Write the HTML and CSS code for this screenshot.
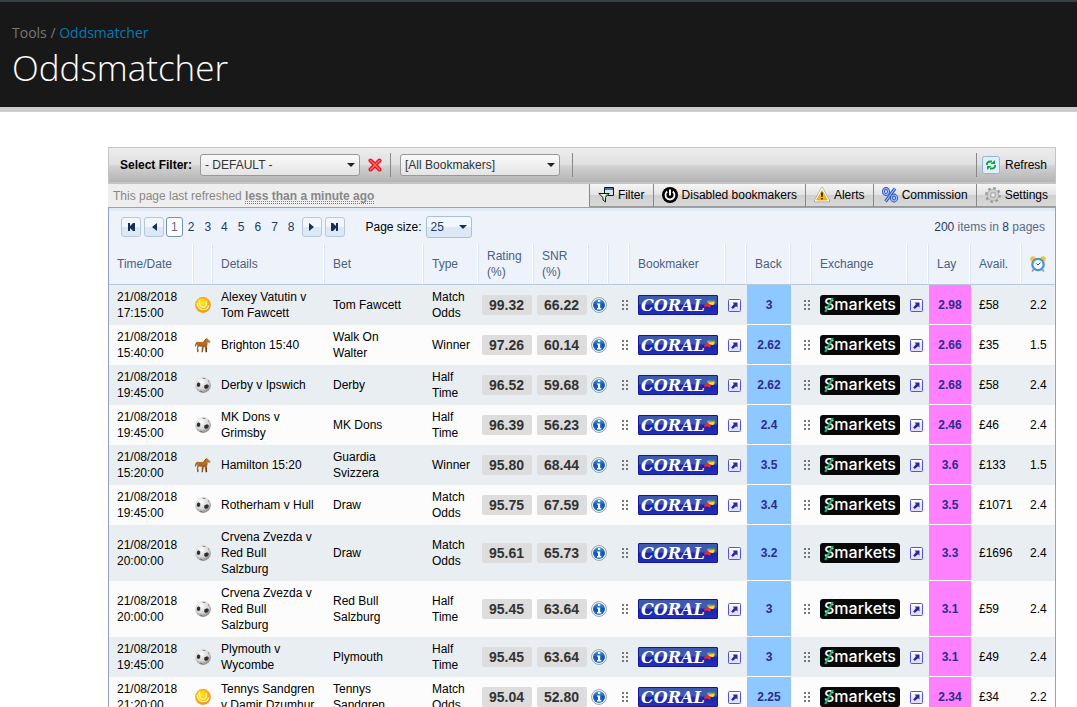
FILE: index.html
```html
<!DOCTYPE html>
<html lang="en">
<head>
<meta charset="utf-8">
<meta name="viewport" content="width=device-width, initial-scale=1">
<title>Oddsmatcher</title>
<link rel="stylesheet" href="styles.css">
</head>
<body>
<svg class="sprite" aria-hidden="true">
  <defs>
    <radialGradient id="g-tennis" cx=".4" cy=".35" r=".7"><stop offset="0" stop-color="#ffee20"/><stop offset=".6" stop-color="#fbc00a"/><stop offset="1" stop-color="#f08a10"/></radialGradient>
    <radialGradient id="g-foot" cx=".4" cy=".3" r=".75"><stop offset="0" stop-color="#fff"/><stop offset=".6" stop-color="#d4d4d4"/><stop offset="1" stop-color="#7c7c7c"/></radialGradient>
    <linearGradient id="g-info" x2="0" y2="1"><stop offset="0" stop-color="#5a9ce4"/><stop offset=".5" stop-color="#0b56b8"/><stop offset="1" stop-color="#1c74d4"/></linearGradient>
    <linearGradient id="g-open" x2="0" y2="1"><stop offset="0" stop-color="#fff"/><stop offset="1" stop-color="#dcdcf8"/></linearGradient>
    <linearGradient id="g-warn" x2="0" y2="1"><stop offset="0" stop-color="#ffd94a"/><stop offset="1" stop-color="#f7a800"/></linearGradient>
    <linearGradient id="g-horse" x2="0" y2="1"><stop offset="0" stop-color="#cc8234"/><stop offset="1" stop-color="#8a4a14"/></linearGradient>
  </defs>
  <symbol id="tennis" viewBox="0 0 16 16"><circle cx="8" cy="8" r="7.9" fill="#f59a2a"/><circle cx="8" cy="8" r="7" fill="url(#g-tennis)"/><path d="M4.200 2.800C3.800 8 5.500 10.500 8.500 10.200S12 7 10.800 4M2 6c.5 4.500 4 7.500 8 6.500 2.200-.6 3.500-2.200 4-4" fill="none" stroke="#fffbd0" stroke-width="1.100"/></symbol>
  <symbol id="football" viewBox="0 0 16 16"><circle cx="8" cy="8" r="7.900" fill="url(#g-foot)"/><path d="M2 6.500l1.500-1.200 1.800 1.300-.2 2.600-1.800.8L1.800 9zM9.500 8.200l2.500-1 1.800 1.300-.6 2.600-2.400 1-1.700-1.400z" fill="#303030"/><path d="M7 .8l3 .2.600.7-2 .3zM5 13.500l2 .5.500 1.200-2-.3zM13.300 3.200l1.200 1.600-.5.300-1-1z" fill="#777"/></symbol>
  <symbol id="horse" viewBox="0 0 16 16"><path d="M.3 9.500L.9 5.800C1.500 4.700 2.800 4.600 4.200 4.900l4.600-.1 2-3 1.200-1 .5 1 3 2.600-.5 1.300-2.300-.4-.3 2.700-.5 1.600.1 5.600h-1.500l-.6-5.200-1.200.3-.8 5h-1.300l.2-5.500-3-.2-1.200 2 .2 3.600H2.200L1.800 11.500l.6-3.200L1.600 7z" fill="url(#g-horse)"/><path d="M8.800 4.800l2.400-3M.5 9.500L1 6.500M11.300 10.500l.4 4.500M3 11.500v3.500" stroke="#4f2c0c" stroke-width=".8" fill="none"/></symbol>
  <symbol id="info" viewBox="0 0 16 16"><circle cx="8" cy="8" r="7.400" fill="#fff" stroke="#909498" stroke-width=".9"/><circle cx="8" cy="8" r="6" fill="url(#g-info)"/><path d="M7 3h2.200v2H7zM6 6.400h3.200v4.700h1.100v1.300H6v-1.300h1V7.700H6z" fill="#fff"/></symbol>
  <symbol id="open" viewBox="0 0 13 13"><rect x=".5" y=".5" width="12" height="12" rx="1" fill="url(#g-open)" stroke="#5550e8"/><path d="M4.500 3.500H9.500v5L8 7.200 4.800 10 3.200 8.400 6 5z" fill="#2c26a4"/></symbol>
  <symbol id="grip" viewBox="0 0 7 11"><path d="M0 0h2v2H0zM4 0h2v2H4zM0 4h2v2H0zM4 4h2v2H4zM0 8h2v2H0zM4 8h2v2H4z" fill="#777"/></symbol>
  <symbol id="flag" viewBox="0 0 12 10"><path d="M3.500 1.500L11 1.500 10.300 3.500H3z" fill="#5cb85c"/><path d="M3.500 3.500L11 3l-1.500 3H5z" fill="#ffd84a"/><path d="M0 6.500Q2 4 4 4l2 1.500h1.500L5.500 9 4 7.600 0 7.800z" fill="#f0282c"/></symbol>
</svg>

<header class="masthead">
  <nav class="crumbs" aria-label="Breadcrumb">Tools / <a href="#">Oddsmatcher</a></nav>
  <h1 class="title">Oddsmatcher</h1>
</header>

<main class="panel">
  <div class="toolbar">
    <label class="toolbar-label" for="filter">Select Filter:</label>
    <span class="combo"><select id="filter"><option>- DEFAULT -</option></select></span>
    <button class="icon-btn" aria-label="Delete filter"><svg width="14" height="14" viewBox="0 0 14 14"><path d="M2.500 2.500l9 9M11.500 2.500l-9 9" stroke="#f0101c" stroke-width="4" stroke-linecap="round"/><path d="M2.500 2.500l9 9M11.500 2.500l-9 9" stroke="#ff6a70" stroke-width="1.500" stroke-linecap="round"/></svg></button>
    <span class="sep"></span>
    <span class="combo"><select aria-label="Bookmakers"><option>[All Bookmakers]</option></select></span>
    <span class="sep sep-after"></span>
    <button class="refresh"><svg width="18" height="18" viewBox="0 0 18 18"><rect x=".5" y=".5" width="17" height="17" rx="2" fill="#e4eefb" stroke="#8fb4e0"/><path d="M5 9Q4.500 5.500 8.500 5.500H10M13 9q.5 3.500-3.500 3.500H8" fill="none" stroke="#12a050" stroke-width="2"/><path d="M8.500 8H13V4zM9.500 10H5v4z" fill="#12a050"/></svg>Refresh</button>
  </div>

  <div class="status">
    <p class="status-text">This page last refreshed <strong class="ago">less than a minute ago</strong></p>
    <div class="tabs">
      <button class="tab"><svg width="16" height="16" viewBox="0 0 16 16"><path d="M6.500.500h9v8h-9z" fill="#dfe4ea" stroke="#111"/><path d="M7 1h8v2H7z" fill="#4672ac"/><path d="M.8 6.500h10.400L7.500 10.500v4.500L5 13v-2.500z" fill="#e8f4ea" stroke="#111"/><path d="M7 10l3-3" stroke="#38b060" stroke-width="1.500"/></svg>Filter</button>
      <button class="tab"><svg width="16" height="16" viewBox="0 0 16 16"><circle cx="8" cy="8" r="8"/><path d="M5.200 4.500a4.500 4.500 0 1 0 5.600 0" fill="none" stroke="#fff" stroke-width="1.800"/><path d="M8 2.500v6" stroke="#fff" stroke-width="2"/></svg>Disabled bookmakers</button>
      <button class="tab"><svg width="16" height="16" viewBox="0 0 16 16"><path d="M8 1.500L14.800 14H1.200z" fill="#aaa" stroke="#999" stroke-width="2.600" stroke-linejoin="round"/><path d="M8 1.700L14.600 13.800H1.400z" fill="#fff" stroke="#fff" stroke-width="1.500" stroke-linejoin="round"/><path d="M8 3.500L13.300 13H2.700z" fill="url(#g-warn)" stroke="#f5b000" stroke-width="1" stroke-linejoin="round"/><path d="M7 5.500h2L8.700 10H7.300zM7.200 10.900h1.600v1.600H7.200z" fill="#222"/></svg>Alerts</button>
      <button class="tab"><svg width="16" height="16" viewBox="0 0 16 16"><g fill="none" stroke="#2450c8" stroke-width="3"><ellipse cx="4" cy="4.500" rx="2.500" ry="3"/><ellipse cx="12" cy="11" rx="2.500" ry="3"/><path d="M13 1.500L3.500 14.500"/></g><g fill="none" stroke="#a8c4ff" stroke-width="1.200"><ellipse cx="4" cy="4.500" rx="2.500" ry="3"/><ellipse cx="12" cy="11" rx="2.500" ry="3"/><path d="M13 1.500L3.500 14.500"/></g></svg>Commission</button>
      <button class="tab"><svg width="16" height="16" viewBox="0 0 16 16"><circle cx="8" cy="8" r="6.700" fill="none" stroke="#999" stroke-width="2.400" stroke-dasharray="2.630"/><circle cx="8" cy="8" r="4.300" fill="none" stroke="#a4a4a4" stroke-width="3.600"/><circle cx="8" cy="8" r="4.200" fill="none" stroke="#cfcfcf" stroke-width="2.400"/><circle cx="8" cy="8" r="2.200" fill="#eee" stroke="#999" stroke-width=".7"/></svg>Settings</button>
    </div>
  </div>

  <section class="grid">
    <div class="pager">
      <button class="page-btn" aria-label="First page"><svg width="9" height="8" viewBox="0 0 9 8"><path d="M1 0h2v3L6 0h2v8H6L3 5v3H1z" fill="#15315a"/></svg></button>
      <button class="page-btn" aria-label="Previous page"><svg width="5" height="8" viewBox="0 0 5 8"><path d="M5 0v8L0 4z" fill="#15315a"/></svg></button>
      <span class="pages"><a class="page current" href="#">1</a><a class="page" href="#">2</a><a class="page" href="#">3</a><a class="page" href="#">4</a><a class="page" href="#">5</a><a class="page" href="#">6</a><a class="page" href="#">7</a><a class="page" href="#">8</a></span>
      <button class="page-btn" aria-label="Next page"><svg width="5" height="8" viewBox="0 0 5 8"><path d="M0 0v8l5-4z" fill="#15315a"/></svg></button>
      <button class="page-btn" aria-label="Last page"><svg width="9" height="8" viewBox="0 0 9 8"><path d="M1 0h2l3 3V0h2v8H6V5L3 8H1z" fill="#15315a"/></svg></button>
      <label class="size-label" for="size">Page size:</label>
      <span class="combo combo-small"><select id="size"><option>25</option></select></span>
      <span class="total"><b>200</b> items in <b>8</b> pages</span>
    </div>

    <table class="odds">
      <colgroup>
        <col class="c-time"><col class="c-sport"><col class="c-details"><col class="c-bet"><col class="c-pct"><col class="c-pct"><col class="c-pct"><col class="c-info"><col class="c-slim"><col class="c-logo"><col class="c-slim"><col class="c-back"><col class="c-slim"><col class="c-logo"><col class="c-slim"><col class="c-lay"><col class="c-avail"><col class="c-clock">
      </colgroup>
      <thead>
        <tr><th>Time/Date</th><th></th><th>Details</th><th>Bet</th><th>Type</th><th>Rating (%)</th><th>SNR (%)</th><th></th><th></th><th>Bookmaker</th><th></th><th>Back</th><th></th><th>Exchange</th><th></th><th>Lay</th><th>Avail.</th>
        <th><svg class="clock" width="16" height="16" viewBox="0 0 16 16" role="img" aria-label="Updated"><circle cx="3" cy="3" r="2.800" fill="#f4c430"/><circle cx="13" cy="3" r="2.800" fill="#f4c430"/><path d="M3.500 13.500L2 15.500M12.500 13.500l1.500 2" stroke="#999" stroke-width="1.600"/><circle cx="8" cy="8.500" r="6.800" fill="#4a94d4"/><circle cx="8" cy="8.500" r="4.500" fill="#f6fbff"/><path d="M8 9l2.500-2.500M8 9L6.500 7.500" stroke="#345" fill="none"/></svg></th></tr>
      </thead>
      <tbody>
        <tr><td>21/08/2018 17:15:00</td><td class="sport"><svg class="i16"><use href="#tennis"/></svg></td><td>Alexey Vatutin v Tom Fawcett</td><td>Tom Fawcett</td><td>Match Odds</td><td class="mid"><span class="pct">99.32</span></td><td class="mid"><span class="pct">66.22</span></td><td class="mid"><svg class="i16"><use href="#info"/></svg></td><td class="grip"><svg class="dots"><use href="#grip"/></svg></td><td><span class="coral">CORAL<svg class="flag"><use href="#flag"/></svg></span></td><td class="open"><svg class="i13"><use href="#open"/></svg></td><td class="back">3</td><td class="grip"><svg class="dots"><use href="#grip"/></svg></td><td><span class="smarkets">Smarkets</span></td><td class="open"><svg class="i13"><use href="#open"/></svg></td><td class="lay">2.98</td><td>£58</td><td>2.2</td></tr>
        <tr><td>21/08/2018 15:40:00</td><td class="sport"><svg class="i16"><use href="#horse"/></svg></td><td>Brighton 15:40</td><td>Walk On Walter</td><td>Winner</td><td class="mid"><span class="pct">97.26</span></td><td class="mid"><span class="pct">60.14</span></td><td class="mid"><svg class="i16"><use href="#info"/></svg></td><td class="grip"><svg class="dots"><use href="#grip"/></svg></td><td><span class="coral">CORAL<svg class="flag"><use href="#flag"/></svg></span></td><td class="open"><svg class="i13"><use href="#open"/></svg></td><td class="back">2.62</td><td class="grip"><svg class="dots"><use href="#grip"/></svg></td><td><span class="smarkets">Smarkets</span></td><td class="open"><svg class="i13"><use href="#open"/></svg></td><td class="lay">2.66</td><td>£35</td><td>1.5</td></tr>
        <tr><td>21/08/2018 19:45:00</td><td class="sport"><svg class="i16"><use href="#football"/></svg></td><td>Derby v Ipswich</td><td>Derby</td><td>Half Time</td><td class="mid"><span class="pct">96.52</span></td><td class="mid"><span class="pct">59.68</span></td><td class="mid"><svg class="i16"><use href="#info"/></svg></td><td class="grip"><svg class="dots"><use href="#grip"/></svg></td><td><span class="coral">CORAL<svg class="flag"><use href="#flag"/></svg></span></td><td class="open"><svg class="i13"><use href="#open"/></svg></td><td class="back">2.62</td><td class="grip"><svg class="dots"><use href="#grip"/></svg></td><td><span class="smarkets">Smarkets</span></td><td class="open"><svg class="i13"><use href="#open"/></svg></td><td class="lay">2.68</td><td>£58</td><td>2.4</td></tr>
        <tr><td>21/08/2018 19:45:00</td><td class="sport"><svg class="i16"><use href="#football"/></svg></td><td>MK Dons v Grimsby</td><td>MK Dons</td><td>Half Time</td><td class="mid"><span class="pct">96.39</span></td><td class="mid"><span class="pct">56.23</span></td><td class="mid"><svg class="i16"><use href="#info"/></svg></td><td class="grip"><svg class="dots"><use href="#grip"/></svg></td><td><span class="coral">CORAL<svg class="flag"><use href="#flag"/></svg></span></td><td class="open"><svg class="i13"><use href="#open"/></svg></td><td class="back">2.4</td><td class="grip"><svg class="dots"><use href="#grip"/></svg></td><td><span class="smarkets">Smarkets</span></td><td class="open"><svg class="i13"><use href="#open"/></svg></td><td class="lay">2.46</td><td>£46</td><td>2.4</td></tr>
        <tr><td>21/08/2018 15:20:00</td><td class="sport"><svg class="i16"><use href="#horse"/></svg></td><td>Hamilton 15:20</td><td>Guardia Svizzera</td><td>Winner</td><td class="mid"><span class="pct">95.80</span></td><td class="mid"><span class="pct">68.44</span></td><td class="mid"><svg class="i16"><use href="#info"/></svg></td><td class="grip"><svg class="dots"><use href="#grip"/></svg></td><td><span class="coral">CORAL<svg class="flag"><use href="#flag"/></svg></span></td><td class="open"><svg class="i13"><use href="#open"/></svg></td><td class="back">3.5</td><td class="grip"><svg class="dots"><use href="#grip"/></svg></td><td><span class="smarkets">Smarkets</span></td><td class="open"><svg class="i13"><use href="#open"/></svg></td><td class="lay">3.6</td><td>£133</td><td>1.5</td></tr>
        <tr><td>21/08/2018 19:45:00</td><td class="sport"><svg class="i16"><use href="#football"/></svg></td><td>Rotherham v Hull</td><td>Draw</td><td>Match Odds</td><td class="mid"><span class="pct">95.75</span></td><td class="mid"><span class="pct">67.59</span></td><td class="mid"><svg class="i16"><use href="#info"/></svg></td><td class="grip"><svg class="dots"><use href="#grip"/></svg></td><td><span class="coral">CORAL<svg class="flag"><use href="#flag"/></svg></span></td><td class="open"><svg class="i13"><use href="#open"/></svg></td><td class="back">3.4</td><td class="grip"><svg class="dots"><use href="#grip"/></svg></td><td><span class="smarkets">Smarkets</span></td><td class="open"><svg class="i13"><use href="#open"/></svg></td><td class="lay">3.5</td><td>£1071</td><td>2.4</td></tr>
        <tr><td>21/08/2018 20:00:00</td><td class="sport"><svg class="i16"><use href="#football"/></svg></td><td>Crvena Zvezda v Red Bull Salzburg</td><td>Draw</td><td>Match Odds</td><td class="mid"><span class="pct">95.61</span></td><td class="mid"><span class="pct">65.73</span></td><td class="mid"><svg class="i16"><use href="#info"/></svg></td><td class="grip"><svg class="dots"><use href="#grip"/></svg></td><td><span class="coral">CORAL<svg class="flag"><use href="#flag"/></svg></span></td><td class="open"><svg class="i13"><use href="#open"/></svg></td><td class="back">3.2</td><td class="grip"><svg class="dots"><use href="#grip"/></svg></td><td><span class="smarkets">Smarkets</span></td><td class="open"><svg class="i13"><use href="#open"/></svg></td><td class="lay">3.3</td><td>£1696</td><td>2.4</td></tr>
        <tr><td>21/08/2018 20:00:00</td><td class="sport"><svg class="i16"><use href="#football"/></svg></td><td>Crvena Zvezda v Red Bull Salzburg</td><td>Red Bull Salzburg</td><td>Half Time</td><td class="mid"><span class="pct">95.45</span></td><td class="mid"><span class="pct">63.64</span></td><td class="mid"><svg class="i16"><use href="#info"/></svg></td><td class="grip"><svg class="dots"><use href="#grip"/></svg></td><td><span class="coral">CORAL<svg class="flag"><use href="#flag"/></svg></span></td><td class="open"><svg class="i13"><use href="#open"/></svg></td><td class="back">3</td><td class="grip"><svg class="dots"><use href="#grip"/></svg></td><td><span class="smarkets">Smarkets</span></td><td class="open"><svg class="i13"><use href="#open"/></svg></td><td class="lay">3.1</td><td>£59</td><td>2.4</td></tr>
        <tr><td>21/08/2018 19:45:00</td><td class="sport"><svg class="i16"><use href="#football"/></svg></td><td>Plymouth v Wycombe</td><td>Plymouth</td><td>Half Time</td><td class="mid"><span class="pct">95.45</span></td><td class="mid"><span class="pct">63.64</span></td><td class="mid"><svg class="i16"><use href="#info"/></svg></td><td class="grip"><svg class="dots"><use href="#grip"/></svg></td><td><span class="coral">CORAL<svg class="flag"><use href="#flag"/></svg></span></td><td class="open"><svg class="i13"><use href="#open"/></svg></td><td class="back">3</td><td class="grip"><svg class="dots"><use href="#grip"/></svg></td><td><span class="smarkets">Smarkets</span></td><td class="open"><svg class="i13"><use href="#open"/></svg></td><td class="lay">3.1</td><td>£49</td><td>2.4</td></tr>
        <tr><td>21/08/2018 21:20:00</td><td class="sport"><svg class="i16"><use href="#tennis"/></svg></td><td>Tennys Sandgren v Damir Dzumhur</td><td>Tennys Sandgren</td><td>Match Odds</td><td class="mid"><span class="pct">95.04</span></td><td class="mid"><span class="pct">52.80</span></td><td class="mid"><svg class="i16"><use href="#info"/></svg></td><td class="grip"><svg class="dots"><use href="#grip"/></svg></td><td><span class="coral">CORAL<svg class="flag"><use href="#flag"/></svg></span></td><td class="open"><svg class="i13"><use href="#open"/></svg></td><td class="back">2.25</td><td class="grip"><svg class="dots"><use href="#grip"/></svg></td><td><span class="smarkets">Smarkets</span></td><td class="open"><svg class="i13"><use href="#open"/></svg></td><td class="lay">2.34</td><td>£34</td><td>2.2</td></tr>
      </tbody>
    </table>
  </section>
</main>
</body>
</html>
```

FILE: styles.css
```css
*, *::before, *::after { box-sizing: border-box; }
body { margin: 0; background: #fff; color: #000; font: 12px/16px "Liberation Sans", Arial, sans-serif; }
button, select { font: inherit; color: inherit; }
button { cursor: pointer; }
svg { display: block; flex: none; }
.sprite { position: absolute; width: 0; height: 0; }

.masthead { border-top: 2px solid #344145; border-bottom: 5px solid #ccc; background: #181818; padding: 21px 12px 14px; font-family: "Open Sans", sans-serif; }
.crumbs { color: #777; font-size: 14px; line-height: 20px; }
.crumbs a { color: #0878b4; text-decoration: none; }
.title { margin: 0; color: #fff; font-size: 35px; font-weight: 300; line-height: 50px; }

.panel { margin: 35px 21px 0 108px; }
.toolbar { display: flex; align-items: center; height: 37px; padding: 0 8px 0 11px; border: 1px solid #c4c4c4; border-bottom: 2px solid #c4c4c4; background: linear-gradient(#ededed, #e0e0e0 50%, #d2d2d2 52%, #b4b4b4); }
.toolbar-label { margin-right: 8px; font-weight: bold; }
.combo { position: relative; display: inline-flex; width: 160px; height: 22px; }
.combo select { width: 100%; appearance: none; border: 1px solid #999; border-radius: 3px; padding: 0 4px; background: linear-gradient(#fafafa, #e4e4e4); color: #333; }
.combo::after { content: ""; position: absolute; right: 5px; top: 9px; border: 4px solid transparent; border-top-color: #222; border-bottom: 0; pointer-events: none; }
.icon-btn { border: 0; background: none; padding: 0; margin: 0 8px; }
.sep { width: 1px; height: 24px; margin: 0 9px 0 0; background: #888; }
.sep-after { margin-left: 12px; }
.refresh { display: flex; align-items: center; gap: 5px; height: 24px; margin-left: auto; padding: 0 0 0 5px; border: 0; border-left: 1px solid #888; background: none; }

.status { display: flex; align-items: stretch; justify-content: space-between; height: 23px; background: #eee; }
.status-text { margin: 0; padding: 4px 5px; color: #888; white-space: nowrap; }
.ago { border-bottom: 1px dotted #777; text-decoration: underline dotted; }
.tabs { display: flex; }
.tab { display: flex; align-items: center; gap: 4px; padding: 0 8px; border: 0; border-left: 1px solid #888; border-bottom: 1px solid #999; background: linear-gradient(#f6f6f6, #e2e2e2 50%, #d0d0d0 52%, #d8d8d8); white-space: nowrap; }

.grid { border: 1px solid #8fa4c4; border-bottom: 0; background: #eef3fb; }
.pager { display: flex; align-items: center; height: 36px; padding: 0 10px 2px 12px; border-top: 3px solid #e2eaf6; color: #15315a; }
.page-btn { display: grid; place-items: center; width: 20px; height: 20px; margin-right: 3px; padding: 0; border: 1px solid #b4c8de; border-radius: 3px; background: linear-gradient(#f2f7fd 50%, #dce8f6 52%); }
.pages { display: flex; margin: 0 2px 0 -1px; }
.page { padding: 2px 5px; color: #1c3a66; text-decoration: none; }
.current { padding: 1px 4px; border: 1px solid #6f93b8; border-radius: 3px; background: #fff; color: #667; }
.size-label { margin: 0 4px 0 18px; color: #000; }
.combo-small { width: 46px; }
.combo-small select { border-color: #aabfd8; background: linear-gradient(#f2f7fd 50%, #dce8f6 52%); color: #1c3a66; }
.combo-small::after { border-top-color: #15315a; }
.total { margin-left: auto; color: #5a6a85; }
.total b { color: #1c3a66; font-weight: normal; }

.odds { width: 100%; table-layout: fixed; border-spacing: 0; }
.c-time { width: 85px; } .c-sport { width: 19px; } .c-details { width: 112px; } .c-bet { width: 99px; }
.c-pct { width: 55px; } .c-info { width: 20px; } .c-logo { width: 96px; } .c-slim { width: 21px; }
.c-back { width: 44px; } .c-lay { width: 42px; } .c-avail { width: 51px; } .c-clock { width: 33px; }
th { height: 40px; padding: 4px 2px 4px 8px; border-right: 1px solid #dce6f2; border-bottom: 1px solid #b4c8de; box-shadow: inset -1px 0 #fff; color: #4a6080; font-weight: normal; text-align: left; }
th:last-child { border-right: 0; box-shadow: none; }
td { padding: 4px 9px 4px 8px; }
tbody tr { background: #fcfcfc; }
tbody tr:nth-child(odd) { background: #e9eef2; }
td.mid { padding: 0; }
td.mid svg, td.mid .pct { margin: 0 auto; }
td.sport { padding: 0 0 0 1px; }
td.open { padding: 0 0 0 2px; }
td.grip { padding: 0 0 0 13px; }
.i16 { width: 16px; height: 16px; }
.i13 { width: 13px; height: 13px; }
.dots { width: 7px; height: 11px; }
.pct { display: block; width: 50px; border-radius: 2px; background: #ddd; color: #333; font-size: 14px; font-weight: bold; line-height: 20px; text-align: center; }
td.back, td.lay { padding: 0; border-bottom: 1px solid #fff; color: #2c2c90; font-weight: bold; text-align: center; }
td.back { background: #8fc8ff; }
td.lay { background: #ff80ff; }
.coral { position: relative; display: block; width: 80px; height: 20px; padding-left: 2px; border: 1px solid #1414a0; border-radius: 1px; background: linear-gradient(#4058b0 45%, #1c24a8 50%, #2030b8); color: #fff; font: italic bold 16px/20px "DejaVu Serif", serif; }
.flag { position: absolute; right: 1px; top: 3px; width: 12px; height: 10px; }
.smarkets { position: relative; display: block; width: 80px; height: 20px; border-radius: 3px; background: #080808; color: #fff; font: 500 16px/18px Inter, sans-serif; text-align: center; }
.smarkets::before { content: ""; position: absolute; left: 8px; top: 2px; width: 2px; height: 16px; background: #10c080; transform: rotate(28deg); }
```
